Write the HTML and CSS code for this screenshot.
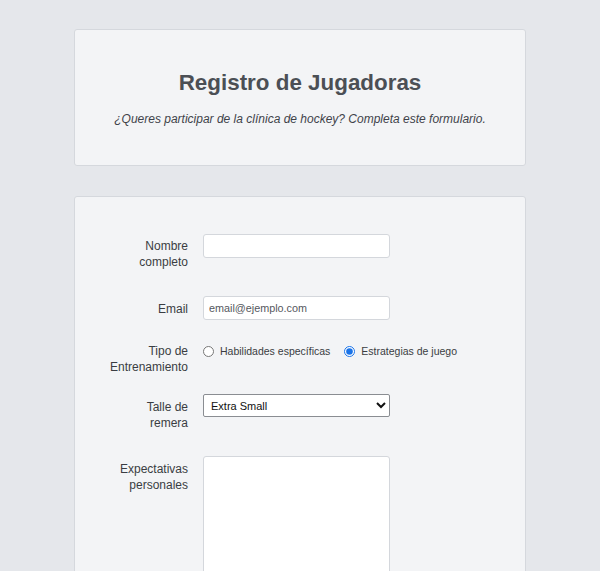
FILE: index.html
```html
<!DOCTYPE html>
<html lang="es">
<head>
<meta charset="utf-8">
<title>Registro de Jugadoras</title>
<link rel="stylesheet" href="styles.css">
</head>
<body>
  <header class="card card--header">
    <h1 class="title">Registro de Jugadoras</h1>
    <p class="subtitle">¿Queres participar de la clínica de hockey? Completa este formulario.</p>
  </header>
  <main class="card card--form">
    <form class="form">
      <div class="row row--first">
        <label class="label label--name" for="nombre">Nombre completo</label>
        <input class="field" id="nombre" type="text">
      </div>
      <div class="row row--email">
        <label class="label label--email" for="email">Email</label>
        <input class="field" id="email" type="email" placeholder="email@ejemplo.com">
      </div>
      <div class="row row--radio">
        <span class="label label--radio">Tipo de Entrenamiento</span>
        <div class="radios">
          <label class="radio"><input type="radio" name="tipo"> Habilidades específicas</label>
          <label class="radio"><input type="radio" name="tipo" checked> Estrategias de juego</label>
        </div>
      </div>
      <div class="row row--select">
        <label class="label label--select" for="talle">Talle de remera</label>
        <select class="select" id="talle">
          <option>Extra Small</option>
          <option>Small</option>
          <option>Medium</option>
          <option>Large</option>
        </select>
      </div>
      <div class="row row--text">
        <label class="label label--text" for="exp">Expectativas personales</label>
        <textarea class="textarea" id="exp"></textarea>
      </div>
    </form>
  </main>
</body>
</html>
```
FILE: styles.css
```css
html, body {
  margin: 0;
  padding: 0;
}
body {
  background: #e5e7eb;
  font-family: "Liberation Sans", Arial, sans-serif;
  color: #374151;
  height: 571px;
  overflow: hidden;
}
.card {
  width: 452px;
  box-sizing: border-box;
  margin: 0 auto;
  background: #f3f4f6;
  border: 1px solid #d5d8dd;
  border-radius: 3px;
}
.card--header {
  margin-top: 29px;
  padding: 39px 20px 38px;
  text-align: center;
}
.title {
  margin: 0;
  font-size: 22.4px;
  line-height: 28px;
  font-weight: bold;
  color: #4b4f55;
}
.subtitle {
  margin: 14px 0 0;
  font-size: 12px;
  line-height: 16px;
  font-style: italic;
  color: #3f434a;
}
.card--form {
  margin-top: 30px;
  padding: 37px 24px 40px 33px;
}
.form {
  display: flex;
  flex-direction: column;
}
.row {
  display: grid;
  grid-template-columns: 80px auto;
  column-gap: 15px;
  align-items: start;
  justify-content: start;
}
.row--email { margin-top: 26px; }
.row--radio { margin-top: 23px; }
.row--select { margin-top: 19px; }
.row--text { margin-top: 25px; }
.label {
  text-align: right;
  font-size: 12px;
  line-height: 16px;
  color: #3a3d42;
}
.label--name { padding-top: 4px; }
.label--email { padding-top: 5px; }
.label--select { padding-top: 5px; }
.label--text { padding-top: 5px; }
.field {
  width: 187px;
  height: 24px;
  box-sizing: border-box;
  border: 1px solid #d4d7dc;
  border-radius: 3px;
  background: #fff;
  padding: 0 5px;
  font-family: "Liberation Sans", Arial, sans-serif;
  font-size: 10.8px;
  color: #333;
}
.field::placeholder {
  color: #55585e;
}
.radios {
  display: flex;
  gap: 14px;
  font-size: 10.5px;
  line-height: 16px;
  color: #3a3d42;
}
.radio {
  display: flex;
  align-items: center;
  white-space: nowrap;
}
.radio input {
  margin: 0 6px 0 0;
  width: 11px;
  height: 11px;
  accent-color: #1a73e8;
}
.select {
  width: 187px;
  height: 23px;
  box-sizing: border-box;
  border: 1px solid #8a8d92;
  border-radius: 2px;
  background: #fff;
  font-family: "Liberation Sans", Arial, sans-serif;
  font-size: 11px;
  color: #111;
  padding: 0 3px;
}
.textarea {
  display: block;
  width: 187px;
  height: 160px;
  box-sizing: border-box;
  border: 1px solid #d4d7dc;
  border-radius: 3px;
  background: #fff;
  resize: vertical;
  margin: 0;
}
```
